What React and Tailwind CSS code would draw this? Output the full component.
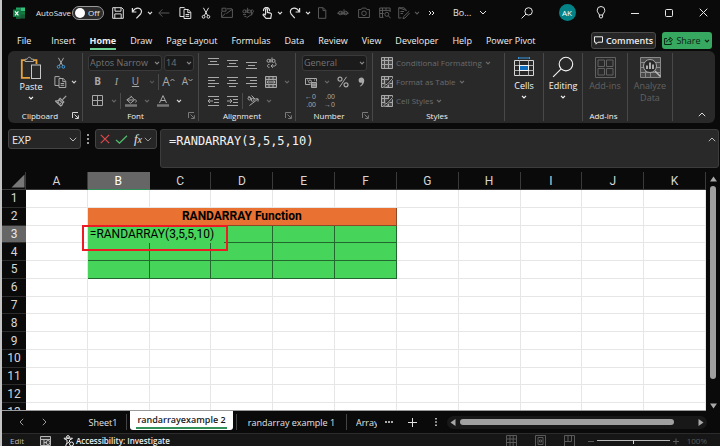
import React from "react";

const UI = "font-['Open_Sans','Noto_Sans',sans-serif]";
const GRID = "font-['Roboto','Noto_Sans',sans-serif]";

function Svg({ w = 12, h = 12, children, className = "" }) {
  return (
    <svg
      width={w}
      height={h}
      viewBox={`0 0 ${w} ${h}`}
      fill="none"
      stroke="currentColor"
      strokeWidth="1"
      aria-hidden="true"
      className={`block shrink-0 ${className}`}
    >
      {children}
    </svg>
  );
}

const Chevron = ({ className = "" }) => (
  <Svg w={6} h={4} className={className}>
    <path d="M1 0.8 3 2.8 5 0.8" strokeWidth="1.2" />
  </Svg>
);

const Scissors = ({ handles = "currentColor" }) => (
  <Svg>
    <path d="M3.4 0.8 7.8 8.8M8.6 0.8 4.2 8.8" />
    <circle cx="3.6" cy="9.8" r="1.4" stroke={handles} />
    <circle cx="8.4" cy="9.8" r="1.4" stroke={handles} />
  </Svg>
);

const Copy = () => (
  <Svg w={13}>
    <path d="M5 9.5H.9V.6h4.4L6 1.5" />
    <path d="M5 2.5h4.2l2.6 2.6v6.4H5z" />
    <path d="M8.8 2.8v2.8h2.8M6.6 7.5h3.6M6.6 9.3h3.6" />
  </Svg>
);

const Camera = () => (
  <Svg>
    <path d="M.6 2.5h2.6l1-1.4h3.6l1 1.4h2.6v8H.6z" />
    <circle cx="6" cy="6.3" r="2.3" />
  </Svg>
);

const Save = () => (
  <Svg>
    <path d="M.7.7h9l1.6 1.6v9H.7z" />
    <path d="M3 .8v3.4h6V.8M2.8 11.3V6.9h6.4v4.4" />
  </Svg>
);

const Undo = () => (
  <Svg>
    <path d="M1.4 1v4h4M1.6 4.8C3 2.4 5 1 7.2 1.2c3 .3 4.4 3.4 2.4 5.8L5.4 11.4" strokeWidth="1.2" />
  </Svg>
);

const Redo = () => (
  <Svg>
    <path d="M10.6 1v4h-4M10.4 4.8C9 2.4 7 1 4.8 1.2c-3 .3-4.6 3.4-2.6 6l3.6 4" strokeWidth="1.2" />
  </Svg>
);

const Launcher = () => (
  <Svg w={7} h={7}>
    <path d="M.5 6V.5H6M2.5 2.5l3.6 3.6M6.4 3.3v3.2H3.2" />
  </Svg>
);

const Search = ({ size = 12 }) => (
  <svg width={size} height={size} viewBox="0 0 12 12" fill="none" stroke="currentColor" strokeWidth={size > 15 ? 0.6 : 1} aria-hidden="true" className="block">
    <circle cx="7.6" cy="4.4" r="3.7" />
    <path d="M5 7 .6 11.4" />
  </svg>
);

const ICONS = {
  save: <Save />,
  undo: <Undo />,
  redo: <Redo />,
  back: <Svg><path d="M.8 6h10.6M4.4 2.4.8 6l3.6 3.6" /></Svg>,
  copy: <Copy />,
  cut: <Scissors />,
  mail: <Svg><path d="M11.4 2v8.4H.6V4.6M.8 9.8l3.6-3.4M5.4 6.6 11.2 2.4M1 1.2h4v3H1zM6 1.8h5" /></Svg>,
  spell: (
    <Svg>
      <circle cx="2.4" cy="4.4" r="1.5" /><path d="M4 2.6V6M5.6.8V6M9.4 3v5.4M4.6 10.8l6.6-4.4" />
      <circle cx="7.2" cy="4.4" r="1.5" /><path d="M1 7.6h3M2.4 9.6h2M9.4 3c3-.8 2.6 3.4 0 2.6" />
    </Svg>
  ),
  touch: (
    <Svg>
      <path d="M4.6 7.4V2.6c0-1.4 1.9-1.4 1.9 0v2.8l3 .7c.8.3 1 .9.9 1.600l-.7 3.700H5.100L2.200 8.200c-.4-1 .8-1.500 1.400-.9l1 1M2.600 4.200a3 3 0 1 1 5.800 0" strokeWidth="1.2" />
    </Svg>
  ),
  page: <Svg><path d="M2.5.7h4.700l2.600 2.600v8H2.500zM7 .9v2.700h2.700" /></Svg>,
  strike: (
    <Svg>
      <circle cx="3.3" cy="6" r="1.8" /><path d="M5.1 3.8v4.200M7 2.200v5.800M.2 6.200h11.600" /><circle cx="8.7" cy="6" r="1.8" />
    </Svg>
  ),
  camera: <Camera />,
  tablefind: (
    <Svg>
      <path d="M4.5 10.4H.7V1h10.400v4M.7 3.400h10.400M3.500 1v9M7 1v3M.7 6.500h4" /><circle cx="7.8" cy="7.3" r="2" /><path d="M9.3 8.8l2.300 2.500" />
    </Svg>
  ),
  note: <Svg><path d="M8.6 3.600.7.700v10.500l2.800-.4M.9.800h5L8.600 3.200M11.200 4.200 5.600 9.600l-.6 2 2-.5L11.600 6M2.500 4.500h3.500M2.500 6.500h2.500" /></Svg>,
};

function ToolButton({ icon, label, dim }) {
  return (
    <button type="button" aria-label={label} className={`flex h-5 w-5 shrink-0 items-center justify-center ${dim ? "text-[#585858]" : "text-[#e0e0e0]"}`}>
      {ICONS[icon]}
    </button>
  );
}

function SplitTool({ icon, label, dim }) {
  return (
    <button type="button" aria-label={label} className={`flex h-5 w-6 shrink-0 items-center justify-between pl-[2px] ${dim ? "text-[#585858]" : "text-[#e0e0e0]"}`}>
      {ICONS[icon]}
      <Chevron />
    </button>
  );
}

function TitleBar() {
  return (
    <header className="flex h-[25px] shrink-0 items-center pl-[11px] text-[#e6e6e6]">
      <svg width="12" height="12" viewBox="0 0 12 12" aria-hidden="true" className="shrink-0">
        <path d="M3 .5h4.500v11H3z" fill="#21a366" />
        <path d="M7.500.5H12v3.700H7.500z" fill="#33c481" />
        <path d="M7.500 4.200H12v3.700H7.500z" fill="#107c41" />
        <path d="M3 7.900h9v3.600H3z" fill="#185c37" />
        <rect y="2.500" width="7.500" height="7.500" rx=".6" fill="#107c41" />
        <path d="M2 4.300 5.400 8.300M5.400 4.300 2 8.300" stroke="#fff" strokeWidth="1.100" />
      </svg>
      <label className="ml-[11px] flex shrink-0 items-center gap-1 text-[8px]">
        <span className="w-8 whitespace-nowrap">AutoSave</span>
        <input type="checkbox" role="switch" className="peer sr-only" />
        <span className="flex h-[14px] w-8 items-center gap-[3px] rounded-full border border-[#9a9a9a] bg-[#2b2b2b] pl-[2px]">
          <span className="h-[10px] w-[10px] rounded-full bg-white" />
          Off
        </span>
      </label>
      <div className="ml-1 flex shrink-0 gap-px">
        <ToolButton icon="save" label="Save" />
        <SplitTool icon="undo" label="Undo" />
        <ToolButton icon="back" label="Back" dim />
        <ToolButton icon="copy" label="Copy" />
        <ToolButton icon="cut" label="Cut" />
        <ToolButton icon="mail" label="Email" dim />
        <ToolButton icon="spell" label="Spelling" dim />
        <SplitTool icon="touch" label="Touch mode" />
      </div>
      <div className="ml-1 flex shrink-0 gap-px">
        <SplitTool icon="redo" label="Redo" />
        <ToolButton icon="page" label="New" dim />
        <ToolButton icon="strike" label="Strikethrough" dim />
        <ToolButton icon="camera" label="Camera" dim />
        <ToolButton icon="tablefind" label="Find in table" dim />
        <SplitTool icon="note" label="Edit note" dim />
        <button type="button" aria-label="More commands" className="flex h-5 w-5 items-center justify-center">
          <Svg w={7} h={6}><path d="M1 1l2 2-2 2M4 1l2 2-2 2" /></Svg>
        </button>
      </div>
      <button type="button" className="ml-3 flex shrink-0 items-center gap-2 text-[9px]">
        Bo...
        <Svg w={8} h={5}><path d="M1 1l3 3 3-3" /></Svg>
      </button>
      <div className="ml-auto flex shrink-0 items-center">
        <button type="button" aria-label="Search" className="flex w-[46px] justify-center"><Search /></button>
        <button type="button" aria-label="Account" className="flex w-[34px] justify-center">
          <span className="flex h-[17px] w-[17px] items-center justify-center rounded-full bg-[#038387] text-[8px] text-white">AK</span>
        </button>
        <button type="button" aria-label="Tips" className="flex w-[34px] justify-center">
          <Svg w={10} h={13}><path d="M3.400 9C3 7.300 1.200 6.600 1.200 4.300a3.800 3.800 0 0 1 7.600 0C8.800 6.600 7 7.300 6.600 9zM3.400 9v2c0 1.300 3.200 1.300 3.200 0V9" /></Svg>
        </button>
        <button type="button" aria-label="Minimize" className="flex w-[34px] justify-center"><Svg w={8} h={8}><path d="M0 4.500h8" /></Svg></button>
        <button type="button" aria-label="Maximize" className="flex w-[34px] justify-center"><Svg w={8} h={8}><rect x=".5" y=".5" width="7" height="7" rx="1" /></Svg></button>
        <button type="button" aria-label="Close" className="flex w-[34px] justify-center"><Svg w={9} h={9}><path d="M.7.7l7.600 7.600M8.300.7.7 8.300" /></Svg></button>
      </div>
    </header>
  );
}

const MENUS = ["Insert", "Home", "Draw", "Page Layout", "Formulas", "Data", "Review", "View", "Developer", "Help", "Power Pivot"];

function MenuTab({ name }) {
  return (
    <button type="button" className={`h-[18px] border-b-2 pt-[3px] leading-3 whitespace-nowrap ${name === "Home" ? "border-[#6fd093] font-bold" : "border-transparent"}`}>
      {name}
    </button>
  );
}

function MenuBar() {
  return (
    <div className="flex h-[26px] shrink-0 items-center justify-between pt-[5px] pr-2">
      <nav className="flex gap-5 pl-[15px] text-[9px] text-[#f0f0f0]">
        <MenuTab name="File" />
        <div className="flex gap-[14px]">
          {MENUS.map((m) => <MenuTab key={m} name={m} />)}
        </div>
      </nav>
      <div className="flex shrink-0 items-center gap-[6px] text-[9px]">
        <button type="button" className="flex h-[17px] w-[65px] items-center justify-center gap-[3px] rounded-[3px] border border-[#4a4a4a] bg-[#262626] font-semibold text-[#ececec]">
          <Svg w={9} h={9}><path d="M.5.8h8v5.400H4L2 8.200v-2H.5z" /></Svg>
          Comments
        </button>
        <button type="button" className="flex h-[17px] w-[50px] items-center justify-center gap-[3px] rounded-[3px] bg-[#36a860] text-[#0d2415]">
          <Svg w={9} h={9}><path d="M3 2.500H.6v6h6.600V6.600M2.600 6.200C3 4 4.500 3.300 6 3.300V1.300l2.500 2.500L6 6V4.400" /></Svg>
          Share
          <Chevron />
        </button>
      </div>
    </div>
  );
}

function Group({ label, launcher, lit, className, children }) {
  return (
    <section aria-label={label} className={`flex shrink-0 flex-col justify-between border-r border-[#484848] ${className}`}>
      <div className="flex-1">{children}</div>
      {label && (
        <div className="flex h-[11px] items-center pr-[3px] text-[8px] leading-[11px] font-medium text-[#f0f0f0]">
          <span className="flex-1 text-center whitespace-nowrap">{label}</span>
          {launcher && (
            <button type="button" aria-label={`${label} settings`} className={lit ? "text-[#d8d8d8]" : "text-[#7a7a7a]"}>
              <Launcher />
            </button>
          )}
        </div>
      )}
    </section>
  );
}

const Row = ({ children, className = "" }) => <div className={`flex h-[19px] items-center ${className}`}>{children}</div>;

function Tool({ label, wide, children, className = "" }) {
  return (
    <button type="button" aria-label={label} className={`flex h-4 shrink-0 items-center justify-center ${wide ? "w-[19px]" : "w-[13px]"} ${className}`}>
      {children}
    </button>
  );
}

const Drop = ({ label, className = "text-[#666]" }) => (
  <Tool label={label} className={className}><Chevron /></Tool>
);

function Combo({ label, value, className }) {
  return (
    <div className={`relative shrink-0 ${className}`}>
      <select aria-label={label} className="block h-4 w-full appearance-none rounded-[3px] border border-[#3a3a3a] bg-[#1b1b1b] pl-[1px] text-[9px] leading-3 text-[#747474]">
        <option>{value}</option>
      </select>
      <Chevron className="pointer-events-none absolute top-[6px] right-[2px] text-[#888]" />
    </div>
  );
}

const Lines = ({ kind }) => {
  const d = {
    top: "M0 1.5h11M2 4.5h7M0 7.5h11",
    middle: "M0 3.5h11M2 6.5h7M0 9.5h11",
    bottom: "M0 5.5h11M2 8.5h7M0 11.5h11",
    left: "M0 1.5h11M0 4.5h7M0 7.5h11M0 10.5h7",
    center: "M0 1.5h11M2 4.5h7M0 7.5h11M2 10.5h7",
    right: "M0 1.5h11M4 4.5h7M0 7.5h11M4 10.5h7",
    outdent: "M0 1.5h11M6 4.5h5M6 7.5h5M0 10.5h11M0 6h5M2 4 0 6l2 2",
    indent: "M0 1.5h11M6 4.5h5M6 7.5h5M0 10.5h11M0 6h5M3 4l2 2-2 2",
  }[kind];
  return <Svg w={11}><path d={d} /></Svg>;
};

const TableIcon = ({ brush }) => (
  <Svg>
    <path d="M.5.5h11v11H.5z" fill="#4a4a4a" />
    <path d="M.5 3.500h11M.5 7.500h11M3.500.5v11M7.500.5v11" />
    {brush && <path d="M11.500 2 5 9l-2.500 2.500" stroke="#292929" strokeWidth="3" />}
    {brush && <path d="M11.500 2.500 6 8.500c-2-.5-2 1.500-3.500 2.500 2 .8 4 .3 4.300-1.700" />}
  </Svg>
);

function BigTool({ label, icon, drop, dim }) {
  return (
    <button type="button" className={`flex w-full flex-col items-center pt-px text-[9px] leading-3 ${dim ? "text-[#626262]" : "font-medium text-[#f4f4f4]"}`}>
      <span className="flex h-[26px] items-center">{icon}</span>
      <span className="text-center">{label}</span>
      {drop && <Chevron className="mt-[3px]" />}
    </button>
  );
}

function Ribbon() {
  return (
    <div className="mr-[5px] ml-[6px] flex h-[72px] shrink-0 rounded-[6px] bg-[#292929] py-[2px] text-[#a8a8a8]">
      <Group label="Clipboard" launcher lit className="w-[75px]">
        <div className="flex">
          <button type="button" className="flex w-[46px] flex-col items-center pt-[3px] text-[9px] leading-3 font-medium text-[#f4f4f4]">
            <Svg w={22} h={25}>
              <path d="M7 4.200H1.800v17.600H10" stroke="#e8a33d" strokeWidth="1.800" />
              <path d="M13 4.200h3.500V8" stroke="#e8a33d" strokeWidth="1.800" />
              <path d="M5 5.500V3.200h2.200C7.500.6 11 .6 11.400 3.200h2.200v2.300z" fill="#292929" stroke="#a8a8a8" />
              <rect x="11.500" y="9" width="9" height="13.500" fill="#292929" stroke="#c8c8c8" />
            </Svg>
            Paste
            <Chevron className="mt-[3px]" />
          </button>
          <div>
            <Row><Tool label="Cut"><Scissors handles="#3f9fe0" /></Tool></Row>
            <Row><Tool label="Copy"><Copy /></Tool><Drop label="Copy options" className="text-[#d0d0d0]" /></Row>
            <Row>
              <Tool label="Format Painter">
                <Svg><path d="M11.200.8 7.600 4.600M5.200 3.400l3.600 3.600-1.200 1.200L4 4.600zM4.300 5C3 6 2 6.200.6 6.200L5.800 11c1.500-.8 1.600-1.800 1.900-2.800M2.500 8l1.600-1.200M4.200 9.500l1.600-1.300" strokeWidth="1.200" /></Svg>
              </Tool>
            </Row>
          </div>
        </div>
      </Group>

      <Group label="Font" launcher className="w-[116px]">
        <Row className="gap-[2px] pl-[5px]">
          <Combo label="Font name" value="Aptos Narrow" className="w-[74px]" />
          <Combo label="Font size" value="14" className="w-[30px]" />
        </Row>
        <Row className="pl-[5px] text-[10px]">
          <Tool label="Bold" wide><b>B</b></Tool>
          <Tool label="Italic" wide><i className="font-['Liberation_Serif',serif]">I</i></Tool>
          <Tool label="Underline" wide><span className="underline">U</span></Tool>
          <Drop label="Underline options" className="text-[#555]" />
          <span className="h-4 w-px bg-[#4a4a4a]" />
          <Tool label="Increase font size" wide><span className="text-[12px]">A</span><Svg w={5} h={8}><path d="M.5 3 2.500 1l2 2" /></Svg></Tool>
          <Tool label="Decrease font size" wide>A<Svg w={5} h={8}><path d="M.5 1l2 2 2-2" /></Svg></Tool>
        </Row>
        <Row className="pl-[5px]">
          <Tool label="Borders" wide><Svg w={11} h={11}><path d="M.5.5h10v10H.5zM5.500.5v10M.5 5.500h10" /></Svg></Tool>
          <Drop label="Border options" />
          <span className="h-4 w-px bg-[#4a4a4a]" />
          <Tool label="Fill color" wide>
            <Svg><path d="M5.500.8 9.600 4.900 5.500 8.200 1.800 4.800 6.800 1.500M2.500 5h6.500M10.500 4.500c1.200 1.600.8 2.800 0 2.800" /><path d="M0 10.500h12" stroke="#777" strokeWidth="2.500" /></Svg>
          </Tool>
          <Drop label="Fill color options" />
          <Tool label="Font color" wide>
            <Svg><path d="M2.500 8 6 .6 9.500 8M3.800 5.500h4.400" /><path d="M0 10.500h12" stroke="#777" strokeWidth="2.500" /></Svg>
          </Tool>
          <Drop label="Font color options" className="text-[#d8d8d8]" />
        </Row>
      </Group>

      <Group label="Alignment" launcher className="w-[97px]">
        <Row className="pl-[5px]">
          <Tool label="Top align" wide><Lines kind="top" /></Tool>
          <Tool label="Middle align" wide><Lines kind="middle" /></Tool>
          <Tool label="Bottom align" wide><Lines kind="bottom" /></Tool>
          <Tool label="Wrap text" wide>
            <Svg>
              <circle cx="3.500" cy="3.800" r="1.500" /><path d="M5.200 2v3.500M7 .5v5M4.500 7.600c-2.600-1-2.600 3.600 0 2.600M6 9h3.500c2 0 2-3 .5-3.500M7.800 7.200 6 9l1.800 1.800" /><circle cx="8.600" cy="3.900" r="1.500" />
            </Svg>
          </Tool>
        </Row>
        <Row className="pl-[5px]">
          <Tool label="Align left" wide><Lines kind="left" /></Tool>
          <Tool label="Center" wide><Lines kind="center" /></Tool>
          <Tool label="Align right" wide><Lines kind="right" /></Tool>
          <Tool label="Merge" wide><Svg><path d="M.5.5h11v11H.5zM.5 3.500h11M.5 8.500h11M4 .5v3M8 .5v3M4 8.500v3M8 8.500v3M2 6h8M3.500 4.700 2 6l1.500 1.300M8.500 4.700 10 6 8.500 7.300" fill="#4a4a4a" /></Svg></Tool>
          <Drop label="Merge options" />
        </Row>
        <Row className="pl-[5px]">
          <Tool label="Decrease indent" wide><Lines kind="outdent" /></Tool>
          <Tool label="Increase indent" wide><Lines kind="indent" /></Tool>
          <span className="h-4 w-px bg-[#4a4a4a]" />
          <Tool label="Orientation" wide>
            <Svg><circle cx="2.500" cy="3.500" r="1.500" /><path d="M1.500 1 5 5M4.500.5l4 4" /><circle cx="5.600" cy="4.800" r="1.500" /><path d="M2.500 10.500 11 4M8.500 3.700l2.700.2-.2 2.700" /></Svg>
          </Tool>
          <Drop label="Orientation options" />
        </Row>
      </Group>

      <Group label="Number" launcher className="w-[77px]">
        <Row className="pl-[6px]"><Combo label="Number format" value="General" className="w-[65px]" /></Row>
        <Row className="pl-[5px]">
          <Tool label="Accounting format" wide>
            <Svg><path d="M5.500 8.500H.5v-6h11v3M2 4h1M9 4h1" /><circle cx="5" cy="5.500" r="1.500" /><path d="M6.500 6.500h5v5h-5zM6.500 9h5" fill="#777" /></Svg>
          </Tool>
          <Drop label="Accounting options" />
          <Tool label="Percent style" wide>
            <Svg><circle cx="3" cy="3.200" r="2" strokeWidth="1.200" /><circle cx="9" cy="8.800" r="2" strokeWidth="1.200" /><path d="M9.500.8 2.500 11.200" /></Svg>
          </Tool>
          <Tool label="Comma style" wide>
            <Svg w={7} h={10}><path d="M3.400.5c4 0 4 6.500-1.200 9l-.5-.6c1.600-1.100 2.300-2 2.400-3.200C1.800 6.200.6 5.100.6 3.200.6 1.600 1.800.5 3.400.5z" fill="currentColor" stroke="none" /></Svg>
          </Tool>
        </Row>
        <Row className="pl-[5px] font-['Liberation_Sans',sans-serif] text-[7px] leading-[8px]">
          <Tool label="Increase decimal" wide><span className="flex flex-col items-end"><span>←0</span><span>.00</span></span></Tool>
          <Tool label="Decrease decimal" wide><span className="flex flex-col items-end"><span>.00</span><span>→0</span></span></Tool>
        </Row>
      </Group>

      <Group label="Styles" className="w-[132px]">
        {["Conditional Formatting", "Format as Table", "Cell Styles"].map((name, i) => (
          <Row key={name} className="pl-2">
            <button type="button" className="flex items-center gap-[3px] text-[8px] whitespace-nowrap text-[#6c6c6c]">
              <span className="text-[#a8a8a8]"><TableIcon brush={i > 0} /></span>
              {name}
              <Chevron />
            </button>
          </Row>
        ))}
      </Group>

      <Group className="w-[39px]">
        <BigTool
          label="Cells"
          drop
          icon={
            <Svg w={20} h={21}>
              <path d="M.5 3.500h19v15H.5z" stroke="#d8d8d8" /><path d="M.5 8.500h19M.5 13.500h19M5.500 3.500v15M14.500 3.500v15" stroke="#b0b0b0" />
              <rect x="5.500" y="8.500" width="9" height="5" fill="#0f6cbd" /><path d="M4.500 0v2M15.500 0v2M4.500 1h11" stroke="#3a96dd" />
            </Svg>
          }
        />
      </Group>
      <Group className="w-[39px]">
        <BigTool label="Editing" drop icon={<Search size={22} />} />
      </Group>
      <Group label="Add-ins" className="w-[45px]">
        <BigTool
          label="Add-ins"
          dim
          icon={<Svg w={21} h={21}><path d="M.5.5h20v20H.5zM3 3h6.500v6.500H3zM11.500 3H18v6.500h-6.500zM3 11.500h6.500V18H3zM11.500 11.500H18V18h-6.500z" /></Svg>}
        />
      </Group>
      <Group className="w-[45px]">
        <BigTool
          label={<><span className="block">Analyze</span><span className="block">Data</span></>}
          dim
          icon={
            <span className="text-[#8a8a8a]">
              <Svg w={21} h={21}>
                <path d="M.5.5h20v20H.5z" fill="#4a4a4a" /><path d="M.5 5.500h20M.5 10.500h20M.5 15.500h20M5.500 14v6.500M10.500 14v6.500" />
                <circle cx="10" cy="9" r="6.500" fill="#292929" stroke="#aaa" /><path d="M15 14l5.500 5.500" stroke="#bbb" strokeWidth="1.500" />
                <path d="M7 12V8.500M10 12V5.500M13 12V7.500" stroke="#bbb" strokeWidth="1.800" />
              </Svg>
            </span>
          }
        />
      </Group>
      <button type="button" aria-label="Collapse ribbon" className="mt-auto mr-[9px] ml-auto pb-1 text-[#ddd]">
        <Svg w={8} h={5}><path d="M.8 4.200 4 1l3.200 3.200" /></Svg>
      </button>
    </div>
  );
}

const MONO = "font-['DejaVu_Sans_Mono','Liberation_Mono',monospace]";

function FormulaBar() {
  return (
    <div className="mt-[6px] mb-[4px] flex h-[39px] shrink-0 items-start pr-px pl-[6px]">
      <div className="relative w-[73px] shrink-0">
        <input aria-label="Name box" defaultValue="EXP" className="block h-[20px] w-full rounded-[3px] border border-[#444] bg-[#262626] pl-[3px] text-[11px] text-[#ececec]" />
        <Svg w={8} h={5} className="pointer-events-none absolute top-2 right-1 text-[#bbb]"><path d="M.8.8 4 4 7.200.8" /></Svg>
      </div>
      <div className="flex h-5 w-[14px] shrink-0 items-center justify-center text-[#ccc]">
        <Svg w={2} h={10}><path d="M1 0v2M1 4v2M1 8v2" strokeWidth="1.500" /></Svg>
      </div>
      <div className="flex h-[20px] w-[62px] shrink-0 items-center justify-between rounded-[3px] border border-[#444] bg-[#262626] px-1">
        <button type="button" aria-label="Cancel" className="text-[#e0474c]"><Svg w={10} h={10}><path d="M.8.8l8.400 8.400M9.200.8.8 9.200" strokeWidth="1.200" /></Svg></button>
        <button type="button" aria-label="Enter" className="text-[#4fb86a]"><Svg w={13} h={9}><path d="M1 5l3.500 3L12 .8" strokeWidth="1.300" /></Svg></button>
        <button type="button" aria-label="Insert function" className="flex items-center gap-[2px] text-[#e0e0e0]">
          <i className="font-['Liberation_Serif',serif] text-[13px] leading-4">f<span className="text-[10px]">x</span></i>
          <Svg w={8} h={5} className="text-[#999]"><path d="M.8.8 4 4 7.200.8" /></Svg>
        </button>
      </div>
      <div className="relative ml-[3px] h-full min-w-0 flex-1">
        <textarea aria-label="Formula bar" defaultValue="=RANDARRAY(3,5,5,10)" className={`block h-full w-full resize-none rounded-[3px] border border-[#3c3c3c] bg-[#292929] px-2 py-1 text-[12px] leading-[14px] text-[#f2f2f2] ${MONO}`} />
        <Svg w={8} h={5} className="pointer-events-none absolute top-2 right-[3px] text-[#bbb]"><path d="M.8 4.200 4 1l3.200 3.200" /></Svg>
      </div>
    </div>
  );
}

const COLS = ["A", "B", "C", "D", "E", "F", "G", "H", "I", "J", "K"];
const ROWS = Array.from({ length: 13 }, (_, i) => i + 1);

function Cell({ row, col }) {
  const filled = row >= 3 && row <= 5 && col >= 1 && col <= 5;
  if (row === 3 && col === 1) {
    return (
      <td className="relative border-r border-b border-[#1f7a3a] bg-[#47d45a] p-0">
        <input
          aria-label="Cell B3"
          defaultValue="=RANDARRAY(3,5,5,10)"
          className="absolute top-0 left-0 z-10 h-[17px] w-[136px] bg-[#47d45a] pl-[2px] text-[12px] leading-4 text-black"
        />
        <span className="pointer-events-none absolute -top-px -left-[6px] z-20 h-[26px] w-[146px] border-2 border-[#ed1c24]" />
      </td>
    );
  }
  if (filled) return <td className="border-r border-b border-[#22672e] bg-[#47d45a] p-0" />;
  return <td className="border-r border-b border-[#e6e6e6] bg-white p-0" />;
}

function Sheet() {
  return (
    <div className="flex min-h-0 flex-1">
      <div className={`min-w-0 flex-1 overflow-hidden border-b border-[#9a9a9a] bg-white ${GRID}`}>
        <table className="h-[249px] w-full table-fixed border-separate border-spacing-0 text-[12px] leading-[14px]">
          <colgroup>
            <col className="w-6" />
            {COLS.map((c) => <col key={c} />)}
          </colgroup>
          <thead>
            <tr className="h-[18px] bg-[#0a0a0a] text-[#d6d6d6]">
              <th className="border-r border-b border-[#3a3a3a] p-0">
                <Svg w={14} h={14} className="ml-auto"><path d="M13.500.5v13H.5z" fill="#777" stroke="none" /></Svg>
              </th>
              {COLS.map((c) => (
                <th key={c} scope="col" className={`border-r border-b p-0 font-normal ${c === "B" ? "border-r-[#666] border-b-[#2f8f57] bg-[#666] text-white" : "border-[#3a3a3a]"}`}>
                  {c}
                </th>
              ))}
            </tr>
          </thead>
          <tbody>
            {ROWS.map((r) => (
              <tr key={r}>
                <th scope="row" className={`border-b border-[#2c2c2c] p-0 font-normal ${r === 3 ? "bg-[#666] text-[#e8e8e8]" : "bg-[#0a0a0a] text-[#d6d6d6]"}`}>
                  {r}
                </th>
                {r === 2 ? (
                  <>
                    <Cell row={2} col={0} />
                    <td colSpan={5} className="border-r border-b border-[#8a4a28] bg-[#e97132] p-0 text-center font-bold text-black">RANDARRAY Function</td>
                    {[6, 7, 8, 9, 10].map((c) => <Cell key={c} row={2} col={c} />)}
                  </>
                ) : (
                  COLS.map((c, i) => <Cell key={c} row={r} col={i} />)
                )}
              </tr>
            ))}
          </tbody>
        </table>
      </div>
      <div className="flex w-[14px] shrink-0 flex-col items-center gap-1 pt-1 pb-[2px] text-[#a8a8a8]">
        <Svg w={7} h={6}><path d="M3.500.5 7 5.500H0z" fill="currentColor" stroke="none" /></Svg>
        <span className="mb-5 w-[6px] flex-1 rounded-full bg-[#a0a0a0]" />
        <Svg w={7} h={6}><path d="M3.500 5.500 7 .5H0z" fill="currentColor" stroke="none" /></Svg>
      </div>
    </div>
  );
}

function SheetTabs() {
  return (
    <div className="flex h-[22px] shrink-0 items-center text-[9px] text-[#e2e2e2]">
      <button type="button" aria-label="Previous sheet" className="ml-2 flex w-[23px] justify-center text-[#999]"><Svg w={5} h={8}><path d="M4.200.8 1 4l3.200 3.200" /></Svg></button>
      <button type="button" aria-label="Next sheet" className="flex w-[23px] justify-center text-[#999]"><Svg w={5} h={8}><path d="M.8.8 4 4 .8 7.200" /></Svg></button>
      <div className="flex h-full shrink-0 items-center">
        <button type="button" className="w-[71px] border-r border-[#444] pt-[2px] pl-6 text-center">Sheet1</button>
        <button type="button" className="mx-[3px] h-full w-[103px] pb-[3px]">
          <span className="flex h-full items-center justify-center rounded-b-[3px] bg-white font-semibold whitespace-nowrap text-[#1a1a1a]">
            <span className="border-b-2 border-[#2f8f57] px-px leading-[14px]">randarrayexample 2</span>
          </span>
        </button>
        <button type="button" className="w-[111px] border-x border-[#444] pt-[2px] text-center whitespace-nowrap">randarray example 1</button>
        <button type="button" className="ml-[9px] w-[21px] overflow-hidden pt-[2px] text-left">Array</button>
      </div>
      <button type="button" aria-label="More sheets" className="flex w-6 justify-center"><Svg w={8} h={2}><path d="M0 1h2M3 1h2M6 1h2" strokeWidth="1.500" /></Svg></button>
      <button type="button" aria-label="New sheet" className="flex w-[23px] justify-center"><Svg w={9} h={9}><path d="M4.500 0v9M0 4.500h9" /></Svg></button>
      <button type="button" aria-label="Sheet options" className="flex w-[23px] justify-center"><Svg w={2} h={8}><path d="M1 0v1.500M1 3.200v1.500M1 6.500V8" strokeWidth="1.500" /></Svg></button>
      <div className="mr-[13px] flex h-[13px] min-w-0 flex-1 items-center gap-1 rounded-full bg-[#181818] px-[3px] text-[#a8a8a8]">
        <Svg w={6} h={7}><path d="M.5 3.500 5.500 0v7z" fill="currentColor" stroke="none" /></Svg>
        <span className="mr-5 h-[6px] flex-1 rounded-full bg-[#a0a0a0]" />
        <Svg w={6} h={7}><path d="M5.500 3.500.5 0v7z" fill="currentColor" stroke="none" /></Svg>
      </div>
    </div>
  );
}

function StatusBar() {
  return (
    <footer className="flex h-[13px] shrink-0 items-start overflow-hidden border-t border-[#2c2c2c] bg-[#161616] pt-px pl-2 text-[8px] leading-[12px] text-[#b8b8b8]">
      <span className="w-[30px]">Edit</span>
      <Svg><path d="M.5 1.500h10v9H.5zM.5 4.500h10M4 4.500v6M4 7.500h3" fill="#333" /><circle cx="8" cy="7.500" r="2" /></Svg>
      <button type="button" className="ml-[11px] flex items-start gap-[2px] font-semibold whitespace-nowrap text-[#ececec]">
        <Svg w={11}><circle cx="5" cy="2" r="1.400" /><path d="M.8 3.500 4 5v2.500L2.500 11.500M9.500 3.500 6.500 5v2M1 3.200h8.500M4 8.500 6 7" /><circle cx="8.500" cy="9" r="2" /></Svg>
        Accessibility: Investigate
      </button>
      <div className="ml-auto flex items-start pr-[13px] text-[#5a5a5a]">
        <button type="button" aria-label="Normal view" className="w-[29px]"><Svg w={11}><path d="M.5.5h10v11M.5.5v11M.5 4h10M.5 7.500h10M4 .5v11M7.200.5v11" /></Svg></button>
        <button type="button" aria-label="Page layout view" className="w-[29px]"><Svg w={11}><path d="M.5.500h10v11H.5zM3 2.500h5v7H3zM4.500 5h2v2h-2z" /></Svg></button>
        <button type="button" aria-label="Page break view" className="w-6"><Svg w={11}><path d="M.5.5h10v11H.5zM.5 6.500h7v-6M4 .5v6" /></Svg></button>
        <Svg w={6}><path d="M0 6.500h6" /></Svg>
        <input type="range" aria-label="Zoom" className="mx-[3px] mt-[5px] h-[3px] w-[73px] appearance-none border-t border-[#b8b8b8] bg-transparent [&::-webkit-slider-thumb]:h-1 [&::-webkit-slider-thumb]:w-px [&::-webkit-slider-thumb]:appearance-none [&::-webkit-slider-thumb]:bg-[#d8d8d8]" />
        <Svg w={7}><path d="M0 6.500h6M3 3.500v6" /></Svg>
        <span className="ml-[7px]">100%</span>
      </div>
    </footer>
  );
}

export default function App() {
  return (
    <div className={`flex h-screen flex-col overflow-hidden border-l-2 border-[#c4c4c4] bg-[#0a0a0a] ${UI}`}>
      <TitleBar />
      <MenuBar />
      <Ribbon />
      <FormulaBar />
      <Sheet />
      <SheetTabs />
      <StatusBar />
    </div>
  );
}
